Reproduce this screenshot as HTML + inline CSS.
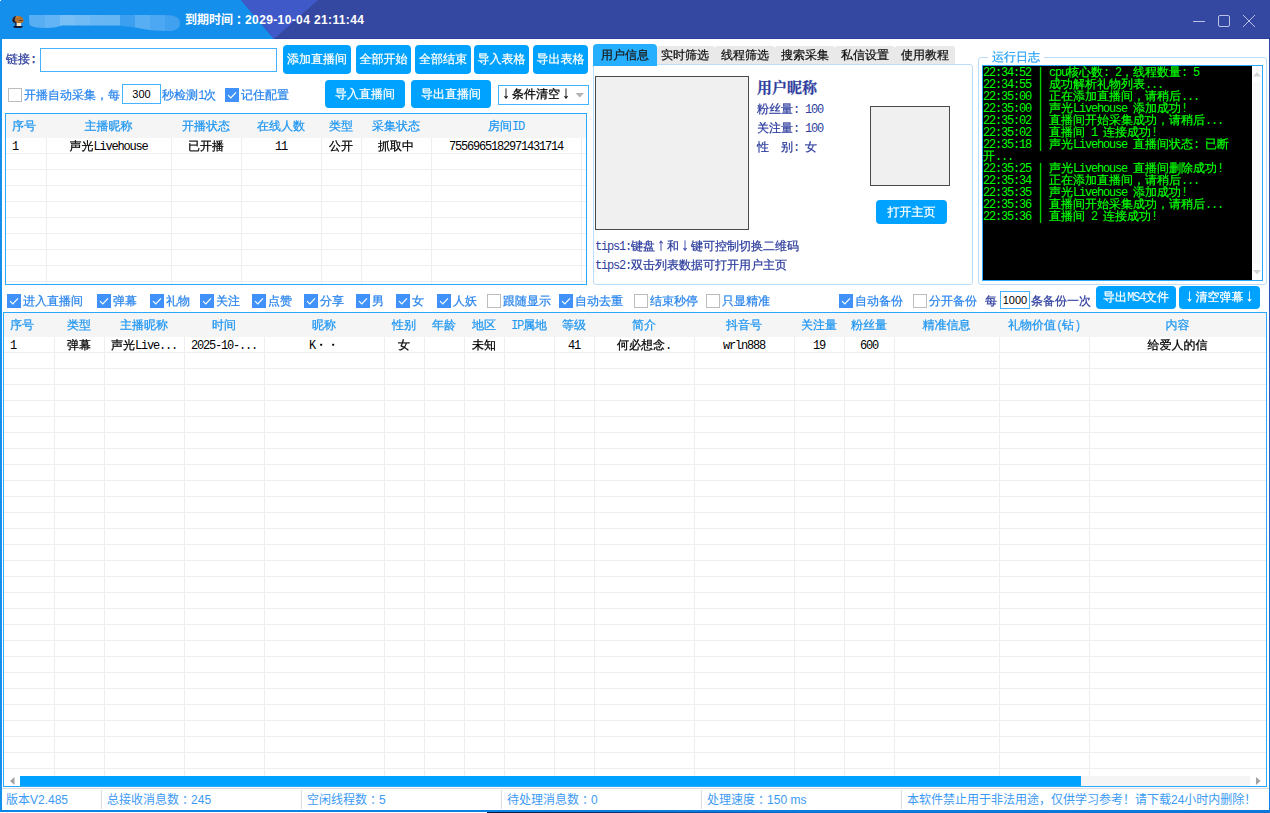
<!DOCTYPE html><html lang="zh-CN"><head><meta charset="utf-8"><title>到期时间</title><style>
*{margin:0;padding:0;box-sizing:border-box}
html,body{width:1270px;height:813px;overflow:hidden;background:#fff}
body{position:relative;font-family:"Liberation Mono","WenQuanYi Zen Hei","Noto Sans CJK SC",monospace;font-size:12px;line-height:14px;color:#000;-webkit-text-stroke:0.25px}
.a{position:absolute;white-space:pre}
.l{font-family:"Liberation Mono",monospace;font-size:12px;letter-spacing:-1.2px;-webkit-text-stroke:0}
.btn{position:absolute;background:#00a2ff;color:#fff;border-radius:4px;text-align:center;white-space:pre}
.hd{color:#1e96f2}
.cbl{color:#2b86ee}
.nv{color:#2e3e9e}
.cb{position:absolute;width:14px;height:14px;border:1px solid #bdbdbd;background:#fff}
.cb.on{border:0;background:#4092fa}
.cb.on svg{position:absolute;left:0;top:0}
.tb{position:absolute;border:1px solid #2ba7fb;background:#fff;overflow:hidden}
.c{position:absolute;text-align:center;white-space:pre;height:14px}
.ar{font-family:"WenQuanYi Zen Hei","Noto Sans CJK SC",sans-serif;line-height:0}
.yh{font-family:"Liberation Sans","Noto Sans CJK SC",sans-serif;-webkit-text-stroke:0}
.st{position:absolute;top:792px;height:16px;line-height:16px;font-size:12px;color:#3c9af4;white-space:pre}
.sep{position:absolute;top:790px;width:1px;height:19px;background:#dedede}
.fc{position:relative;left:3px}
.log{color:#00ff00}
</style></head><body>
<svg class="a" style="left:0;top:0" width="1270" height="39" viewBox="0 0 1270 39">
<rect width="1270" height="39" fill="#3548a1"/>
<polygon points="0,0 241,0 274,39 0,39" fill="#158fec"/>
<polygon points="241,0 318,0 274,39" fill="#4059c9"/>
<rect x="274" y="38" width="996" height="1" fill="#2c3f9c"/>
<rect x="0" y="0" width="1" height="1" fill="#fff"/>
<g>
<clipPath id="bl"><path d="M29 15 L165 15 Q180 15 180 23 Q180 31 168 31 Q150 31 138 28 Q125 26 118 25.5 L62 25.5 Q55 28 45 28 Q33 28 29.5 25 Z"/></clipPath>
<g clip-path="url(#bl)">
<rect x="29" y="14" width="16" height="18" fill="#58aef3"/>
<rect x="45" y="14" width="15" height="18" fill="#63b4f4"/>
<rect x="60" y="14" width="15" height="18" fill="#78bff6"/>
<rect x="75" y="14" width="15" height="18" fill="#70bbf5"/>
<rect x="90" y="14" width="15" height="18" fill="#68b7f4"/>
<rect x="105" y="14" width="15" height="18" fill="#66b6f4"/>
<rect x="120" y="14" width="15" height="18" fill="#3c9ff0"/>
<rect x="135" y="14" width="15" height="18" fill="#58aef3"/>
<rect x="150" y="14" width="15" height="18" fill="#4ca8f2"/>
<rect x="165" y="14" width="16" height="18" fill="#3fa1f0"/>
</g></g>
<!-- mushroom icon -->
<g>
<path d="M12.3 21 Q12.3 16 17.5 16 Q23.6 16 23.6 21 Q23.6 23 21.5 23 L15 23 Q12.3 23 12.3 21Z" fill="#b3712f"/>
<path d="M15 17 Q17.5 16 21 17.4 Q19 17 15 18.2Z" fill="#c98a45"/>
<path d="M12.2 20.5 Q12.6 16.6 16.2 15.9 Q14.2 18.5 15 21 L16.7 23 L16.7 26 L15.2 26 L15.2 23 Q12.4 22.8 12.2 20.5Z" fill="#16203c"/>
<rect x="19.5" y="20" width="3" height="1" fill="#5a3d22"/>
<rect x="16.7" y="23" width="4.4" height="3.2" fill="#f6e7c8"/>
<path d="M12.9 26 L23 26 L21.5 28 L14.5 28Z" fill="#0f1a36"/>
</g>
<!-- window controls -->
<g fill="none" stroke="#bcc1e7" stroke-width="1">
<path d="M1193 21.5H1205"/>
<rect x="1218.5" y="15.5" width="11" height="11" rx="1.5"/>
<path d="M1243 15 L1255 27 M1255 15 L1243 27"/>
</g>
</svg>
<div class="a yh" style="left:185px;top:11px;height:18px;line-height:18px;font-size:12px;font-weight:bold;color:#fff">到期时间<span class="fc">：</span><span style="letter-spacing:0.38px">2029-10-04 21:11:44</span></div>
<div class="a" style="left:0;top:39px;width:2px;height:773px;background:#158fec"></div>
<div class="a" style="left:1269px;top:39px;width:1px;height:774px;background:linear-gradient(#3046a2,#2a55b8 40%,#0c84e6)"></div>
<div class="a" style="left:0;top:810px;width:1270px;height:2px;background:linear-gradient(90deg,#0a86e6,#0c78da)"></div>
<div class="a" style="left:487px;top:812px;width:783px;height:1px;background:linear-gradient(90deg,#07183c,#0a2f6e 15%,#0d6fd2 40%,#0d74d8)"></div>
<div class="a nv" style="left:6px;top:53px">链接:</div>
<div class="a" style="left:40px;top:48px;width:237px;height:24px;border:1px solid #45b3fc;background:#fff"></div>
<div class="btn" style="left:283px;top:45px;width:68px;height:29px;line-height:31px">添加直播间</div>
<div class="btn" style="left:356px;top:45px;width:55px;height:29px;line-height:31px">全部开始</div>
<div class="btn" style="left:415px;top:45px;width:56px;height:29px;line-height:31px">全部结束</div>
<div class="btn" style="left:474px;top:45px;width:55px;height:29px;line-height:31px">导入表格</div>
<div class="btn" style="left:533px;top:45px;width:55px;height:29px;line-height:31px">导出表格</div>
<div class="btn" style="left:325px;top:80px;width:80px;height:28px;line-height:30px">导入直播间</div>
<div class="btn" style="left:411px;top:80px;width:80px;height:28px;line-height:30px">导出直播间</div>
<div class="cb" style="left:8px;top:88px"></div>
<div class="a cbl" style="left:24px;top:89px">开播自动采集，每</div>
<div class="a" style="left:122px;top:84px;width:39px;height:20px;border:1px solid #45b3fc;background:#fff;text-align:center;line-height:19px;font-family:'Liberation Sans',sans-serif;font-size:11px;-webkit-text-stroke:0">300</div>
<div class="a cbl" style="left:162px;top:89px">秒检测<span class="l">1</span>次</div>
<div class="cb on" style="left:225px;top:88px"><svg width="14" height="14" viewBox="0 0 14 14"><path d="M3 7.2 L5.8 10 L11 4.3" fill="none" stroke="#fff" stroke-width="1.15"/></svg></div>
<div class="a cbl" style="left:241px;top:89px">记住配置</div>
<div class="a" style="left:498px;top:85px;width:91px;height:20px;border:1px solid #45b3fc;background:#fff"></div>
<div class="a" style="left:500px;top:88px"><span class="ar">↓</span>条件清空<span class="ar">↓</span></div>
<svg class="a" style="left:575px;top:93px" width="10" height="5"><polygon points="0.5,0 9,0 4.75,4.5" fill="#b4b4b4"/></svg>
<div class="tb" style="left:5px;top:113px;width:582px;height:172px">
<div class="a" style="left:0;top:0;width:580px;height:24px;background:#f5f5f5"></div>
<div class="a" style="left:0;top:39px;width:580px;height:1px;background:#eeeeee"></div>
<div class="a" style="left:0;top:55px;width:580px;height:1px;background:#eeeeee"></div>
<div class="a" style="left:0;top:71px;width:580px;height:1px;background:#eeeeee"></div>
<div class="a" style="left:0;top:87px;width:580px;height:1px;background:#eeeeee"></div>
<div class="a" style="left:0;top:103px;width:580px;height:1px;background:#eeeeee"></div>
<div class="a" style="left:0;top:119px;width:580px;height:1px;background:#eeeeee"></div>
<div class="a" style="left:0;top:135px;width:580px;height:1px;background:#eeeeee"></div>
<div class="a" style="left:0;top:151px;width:580px;height:1px;background:#eeeeee"></div>
<div class="a" style="left:0;top:167px;width:580px;height:1px;background:#eeeeee"></div>
<div class="a" style="left:40px;top:24px;width:1px;height:146px;background:#eeeeee"></div>
<div class="a" style="left:165px;top:24px;width:1px;height:146px;background:#eeeeee"></div>
<div class="a" style="left:235px;top:24px;width:1px;height:146px;background:#eeeeee"></div>
<div class="a" style="left:315px;top:24px;width:1px;height:146px;background:#eeeeee"></div>
<div class="a" style="left:355px;top:24px;width:1px;height:146px;background:#eeeeee"></div>
<div class="a" style="left:425px;top:24px;width:1px;height:146px;background:#eeeeee"></div>
<div class="a" style="left:575px;top:24px;width:1px;height:146px;background:#eeeeee"></div>
<div class="c hd" style="left:6px;top:6px;text-align:left">序号</div>
<div class="c" style="left:6px;top:26px;text-align:left"><span class="l">1</span></div>
<div class="c hd" style="left:40px;top:6px;width:125px">主播昵称</div>
<div class="c" style="left:40px;top:26px;width:125px">声光<span class="l">Livehouse</span></div>
<div class="c hd" style="left:165px;top:6px;width:70px">开播状态</div>
<div class="c" style="left:165px;top:26px;width:70px">已开播</div>
<div class="c hd" style="left:235px;top:6px;width:80px">在线人数</div>
<div class="c" style="left:235px;top:26px;width:80px"><span class="l">11</span></div>
<div class="c hd" style="left:315px;top:6px;width:40px">类型</div>
<div class="c" style="left:315px;top:26px;width:40px">公开</div>
<div class="c hd" style="left:355px;top:6px;width:70px">采集状态</div>
<div class="c" style="left:355px;top:26px;width:70px">抓取中</div>
<div class="c hd" style="left:425px;top:6px;width:150px">房间<span class="l">ID</span></div>
<div class="c" style="left:425px;top:26px;width:150px"><span class="l">7556965182971431714</span></div>
<div class="c hd" style="left:575px;top:6px;width:5px"></div>
</div>
<div class="a" style="left:593px;top:64px;width:380px;height:221px;border:1px solid #b9ddfa;border-radius:3px;background:#fff"></div>
<div class="a" style="left:593px;top:44px;width:64px;height:22px;background:#27afff;border-radius:4px 4px 0 0;text-align:center;line-height:24px;color:#1a1a1a">用户信息</div>
<div class="a" style="left:657px;top:46px;width:58px;height:18px;background:#e9e9e9;border-radius:3px 3px 0 0"></div>
<div class="a" style="left:655px;top:46px;width:60px;height:18px;text-align:center;line-height:20px;color:#111">实时筛选</div>
<div class="a" style="left:715px;top:46px;width:60px;height:18px;background:#e9e9e9;border-radius:3px 3px 0 0"></div>
<div class="a" style="left:715px;top:46px;width:60px;height:18px;text-align:center;line-height:20px;color:#111">线程筛选</div>
<div class="a" style="left:775px;top:46px;width:60px;height:18px;background:#e9e9e9;border-radius:3px 3px 0 0"></div>
<div class="a" style="left:775px;top:46px;width:60px;height:18px;text-align:center;line-height:20px;color:#111">搜索采集</div>
<div class="a" style="left:835px;top:46px;width:60px;height:18px;background:#e9e9e9;border-radius:3px 3px 0 0"></div>
<div class="a" style="left:835px;top:46px;width:60px;height:18px;text-align:center;line-height:20px;color:#111">私信设置</div>
<div class="a" style="left:895px;top:46px;width:60px;height:18px;background:#e9e9e9;border-radius:3px 3px 0 0"></div>
<div class="a" style="left:895px;top:46px;width:60px;height:18px;text-align:center;line-height:20px;color:#111">使用教程</div>
<div class="a" style="left:595px;top:76px;width:154px;height:154px;border:1px solid #4a4a4a;background:#f0f0f0"></div>
<div class="a" style="left:870px;top:106px;width:80px;height:80px;border:1px solid #4a4a4a;background:#f0f0f0"></div>
<div class="a nv" style="left:757px;top:80px;font-size:15px;line-height:16px;font-weight:bold;font-family:'Liberation Serif','Noto Serif CJK SC',serif">用户昵称</div>
<div class="a nv" style="left:757px;top:103px">粉丝量<span class="l">: 100</span></div>
<div class="a nv" style="left:757px;top:122px">关注量<span class="l">: 100</span></div>
<div class="a nv" style="left:757px;top:141px">性　别<span class="l">:</span><span class="l"> </span>女</div>
<div class="btn" style="left:876px;top:200px;width:71px;height:24px;line-height:26px">打开主页</div>
<div class="a nv" style="left:595px;top:240px"><span class="l">tips1:</span>键盘<span class="ar">↑</span>和<span class="ar">↓</span>键可控制切换二维码</div>
<div class="a nv" style="left:595px;top:259px"><span class="l">tips2:</span>双击列表数据可打开用户主页</div>
<div class="a" style="left:978px;top:57px;width:289px;height:228px;border:1px solid #b9ddfa;border-radius:3px"></div>
<div class="a" style="left:988px;top:51px;width:56px;height:13px;background:#fff;color:#2aa2f6;padding-left:4px">运行日志</div>
<div class="a" style="left:982px;top:65px;width:281px;height:216px;border:1px solid #2ba7fb;background:#fff"></div>
<div class="a" style="left:983px;top:66px;width:269px;height:214px;background:#000"></div>
<div class="a" style="left:1253px;top:82px;width:8px;height:182px;background:#fafafa"></div>
<svg class="a" style="left:1253px;top:72px" width="8" height="5"><polygon points="0,4.5 8,4.5 4,0" fill="#d4d4d4"/></svg>
<svg class="a" style="left:1253px;top:270px" width="8" height="5"><polygon points="0,0 8,0 4,4.5" fill="#d4d4d4"/></svg>
<div class="a log" style="left:983px;top:66px"><span class="l">22:34:52 | </span><span class="l">cpu</span>核心数<span class="l">: 2</span>，线程数量<span class="l">: 5</span></div>
<div class="a log" style="left:983px;top:78px"><span class="l">22:34:55 | </span>成功解析礼物列表<span class="l">...</span></div>
<div class="a log" style="left:983px;top:90px"><span class="l">22:35:00 | </span>正在添加直播间，请稍后<span class="l">...</span></div>
<div class="a log" style="left:983px;top:102px"><span class="l">22:35:00 | </span>声光<span class="l">Livehouse </span>添加成功<span class="l">!</span></div>
<div class="a log" style="left:983px;top:114px"><span class="l">22:35:02 | </span>直播间开始采集成功，请稍后<span class="l">...</span></div>
<div class="a log" style="left:983px;top:126px"><span class="l">22:35:02 | </span>直播间<span class="l"> 1 </span>连接成功<span class="l">!</span></div>
<div class="a log" style="left:983px;top:138px"><span class="l">22:35:18 | </span>声光<span class="l">Livehouse </span>直播间状态<span class="l">: </span>已断</div>
<div class="a log" style="left:983px;top:150px">开<span class="l">...</span></div>
<div class="a log" style="left:983px;top:162px"><span class="l">22:35:25 | </span>声光<span class="l">Livehouse </span>直播间删除成功<span class="l">!</span></div>
<div class="a log" style="left:983px;top:174px"><span class="l">22:35:34 | </span>正在添加直播间，请稍后<span class="l">...</span></div>
<div class="a log" style="left:983px;top:186px"><span class="l">22:35:35 | </span>声光<span class="l">Livehouse </span>添加成功<span class="l">!</span></div>
<div class="a log" style="left:983px;top:198px"><span class="l">22:35:36 | </span>直播间开始采集成功，请稍后<span class="l">...</span></div>
<div class="a log" style="left:983px;top:210px"><span class="l">22:35:36 | </span>直播间<span class="l"> 2 </span>连接成功<span class="l">!</span></div>
<div class="cb on" style="left:7px;top:294px"><svg width="14" height="14" viewBox="0 0 14 14"><path d="M3 7.2 L5.8 10 L11 4.3" fill="none" stroke="#fff" stroke-width="1.15"/></svg></div>
<div class="a cbl" style="left:23px;top:295px">进入直播间</div>
<div class="cb on" style="left:97px;top:294px"><svg width="14" height="14" viewBox="0 0 14 14"><path d="M3 7.2 L5.8 10 L11 4.3" fill="none" stroke="#fff" stroke-width="1.15"/></svg></div>
<div class="a cbl" style="left:113px;top:295px">弹幕</div>
<div class="cb on" style="left:150px;top:294px"><svg width="14" height="14" viewBox="0 0 14 14"><path d="M3 7.2 L5.8 10 L11 4.3" fill="none" stroke="#fff" stroke-width="1.15"/></svg></div>
<div class="a cbl" style="left:166px;top:295px">礼物</div>
<div class="cb on" style="left:200px;top:294px"><svg width="14" height="14" viewBox="0 0 14 14"><path d="M3 7.2 L5.8 10 L11 4.3" fill="none" stroke="#fff" stroke-width="1.15"/></svg></div>
<div class="a cbl" style="left:216px;top:295px">关注</div>
<div class="cb on" style="left:252px;top:294px"><svg width="14" height="14" viewBox="0 0 14 14"><path d="M3 7.2 L5.8 10 L11 4.3" fill="none" stroke="#fff" stroke-width="1.15"/></svg></div>
<div class="a cbl" style="left:268px;top:295px">点赞</div>
<div class="cb on" style="left:304px;top:294px"><svg width="14" height="14" viewBox="0 0 14 14"><path d="M3 7.2 L5.8 10 L11 4.3" fill="none" stroke="#fff" stroke-width="1.15"/></svg></div>
<div class="a cbl" style="left:320px;top:295px">分享</div>
<div class="cb on" style="left:356px;top:294px"><svg width="14" height="14" viewBox="0 0 14 14"><path d="M3 7.2 L5.8 10 L11 4.3" fill="none" stroke="#fff" stroke-width="1.15"/></svg></div>
<div class="a cbl" style="left:372px;top:295px">男</div>
<div class="cb on" style="left:396px;top:294px"><svg width="14" height="14" viewBox="0 0 14 14"><path d="M3 7.2 L5.8 10 L11 4.3" fill="none" stroke="#fff" stroke-width="1.15"/></svg></div>
<div class="a cbl" style="left:412px;top:295px">女</div>
<div class="cb on" style="left:437px;top:294px"><svg width="14" height="14" viewBox="0 0 14 14"><path d="M3 7.2 L5.8 10 L11 4.3" fill="none" stroke="#fff" stroke-width="1.15"/></svg></div>
<div class="a cbl" style="left:453px;top:295px">人妖</div>
<div class="cb" style="left:487px;top:294px"></div>
<div class="a cbl" style="left:503px;top:295px">跟随显示</div>
<div class="cb on" style="left:559px;top:294px"><svg width="14" height="14" viewBox="0 0 14 14"><path d="M3 7.2 L5.8 10 L11 4.3" fill="none" stroke="#fff" stroke-width="1.15"/></svg></div>
<div class="a cbl" style="left:575px;top:295px">自动去重</div>
<div class="cb" style="left:634px;top:294px"></div>
<div class="a cbl" style="left:650px;top:295px">结束秒停</div>
<div class="cb" style="left:706px;top:294px"></div>
<div class="a cbl" style="left:722px;top:295px">只显精准</div>
<div class="cb on" style="left:839px;top:294px"><svg width="14" height="14" viewBox="0 0 14 14"><path d="M3 7.2 L5.8 10 L11 4.3" fill="none" stroke="#fff" stroke-width="1.15"/></svg></div>
<div class="a cbl" style="left:855px;top:295px">自动备份</div>
<div class="cb" style="left:913px;top:294px"></div>
<div class="a cbl" style="left:929px;top:295px">分开备份</div>
<div class="a nv" style="left:985px;top:295px">每</div>
<div class="a" style="left:1000px;top:291px;width:30px;height:18px;border:1px solid #45b3fc;background:#fff;text-align:center;line-height:17px;font-family:'Liberation Sans',sans-serif;font-size:11px;-webkit-text-stroke:0">1000</div>
<div class="a nv" style="left:1031px;top:295px">条备份一次</div>
<div class="btn" style="left:1096px;top:286px;width:80px;height:23px;line-height:25px">导出<span class="l">MS4</span>文件</div>
<div class="btn" style="left:1179px;top:286px;width:81px;height:23px;line-height:25px"><span class="ar">↓</span>清空弹幕<span class="ar">↓</span></div>
<div class="tb" style="left:3px;top:312px;width:1264px;height:475px">
<div class="a" style="left:0;top:0;width:1262px;height:24px;background:#f5f5f5"></div>
<div class="a" style="left:0;top:39px;width:1262px;height:1px;background:#eeeeee"></div>
<div class="a" style="left:0;top:55px;width:1262px;height:1px;background:#eeeeee"></div>
<div class="a" style="left:0;top:71px;width:1262px;height:1px;background:#eeeeee"></div>
<div class="a" style="left:0;top:87px;width:1262px;height:1px;background:#eeeeee"></div>
<div class="a" style="left:0;top:103px;width:1262px;height:1px;background:#eeeeee"></div>
<div class="a" style="left:0;top:119px;width:1262px;height:1px;background:#eeeeee"></div>
<div class="a" style="left:0;top:135px;width:1262px;height:1px;background:#eeeeee"></div>
<div class="a" style="left:0;top:151px;width:1262px;height:1px;background:#eeeeee"></div>
<div class="a" style="left:0;top:167px;width:1262px;height:1px;background:#eeeeee"></div>
<div class="a" style="left:0;top:183px;width:1262px;height:1px;background:#eeeeee"></div>
<div class="a" style="left:0;top:199px;width:1262px;height:1px;background:#eeeeee"></div>
<div class="a" style="left:0;top:215px;width:1262px;height:1px;background:#eeeeee"></div>
<div class="a" style="left:0;top:231px;width:1262px;height:1px;background:#eeeeee"></div>
<div class="a" style="left:0;top:247px;width:1262px;height:1px;background:#eeeeee"></div>
<div class="a" style="left:0;top:263px;width:1262px;height:1px;background:#eeeeee"></div>
<div class="a" style="left:0;top:279px;width:1262px;height:1px;background:#eeeeee"></div>
<div class="a" style="left:0;top:295px;width:1262px;height:1px;background:#eeeeee"></div>
<div class="a" style="left:0;top:311px;width:1262px;height:1px;background:#eeeeee"></div>
<div class="a" style="left:0;top:327px;width:1262px;height:1px;background:#eeeeee"></div>
<div class="a" style="left:0;top:343px;width:1262px;height:1px;background:#eeeeee"></div>
<div class="a" style="left:0;top:359px;width:1262px;height:1px;background:#eeeeee"></div>
<div class="a" style="left:0;top:375px;width:1262px;height:1px;background:#eeeeee"></div>
<div class="a" style="left:0;top:391px;width:1262px;height:1px;background:#eeeeee"></div>
<div class="a" style="left:0;top:407px;width:1262px;height:1px;background:#eeeeee"></div>
<div class="a" style="left:0;top:423px;width:1262px;height:1px;background:#eeeeee"></div>
<div class="a" style="left:0;top:439px;width:1262px;height:1px;background:#eeeeee"></div>
<div class="a" style="left:0;top:455px;width:1262px;height:1px;background:#eeeeee"></div>
<div class="a" style="left:50px;top:24px;width:1px;height:439px;background:#eeeeee"></div>
<div class="a" style="left:100px;top:24px;width:1px;height:439px;background:#eeeeee"></div>
<div class="a" style="left:180px;top:24px;width:1px;height:439px;background:#eeeeee"></div>
<div class="a" style="left:260px;top:24px;width:1px;height:439px;background:#eeeeee"></div>
<div class="a" style="left:380px;top:24px;width:1px;height:439px;background:#eeeeee"></div>
<div class="a" style="left:420px;top:24px;width:1px;height:439px;background:#eeeeee"></div>
<div class="a" style="left:460px;top:24px;width:1px;height:439px;background:#eeeeee"></div>
<div class="a" style="left:500px;top:24px;width:1px;height:439px;background:#eeeeee"></div>
<div class="a" style="left:550px;top:24px;width:1px;height:439px;background:#eeeeee"></div>
<div class="a" style="left:590px;top:24px;width:1px;height:439px;background:#eeeeee"></div>
<div class="a" style="left:690px;top:24px;width:1px;height:439px;background:#eeeeee"></div>
<div class="a" style="left:790px;top:24px;width:1px;height:439px;background:#eeeeee"></div>
<div class="a" style="left:840px;top:24px;width:1px;height:439px;background:#eeeeee"></div>
<div class="a" style="left:890px;top:24px;width:1px;height:439px;background:#eeeeee"></div>
<div class="a" style="left:995px;top:24px;width:1px;height:439px;background:#eeeeee"></div>
<div class="a" style="left:1085px;top:24px;width:1px;height:439px;background:#eeeeee"></div>
<div class="c hd" style="left:6px;top:6px;text-align:left">序号</div>
<div class="c" style="left:6px;top:26px;text-align:left"><span class="l">1</span></div>
<div class="c hd" style="left:50px;top:6px;width:50px">类型</div>
<div class="c" style="left:50px;top:26px;width:50px">弹幕</div>
<div class="c hd" style="left:100px;top:6px;width:80px">主播昵称</div>
<div class="c" style="left:100px;top:26px;width:80px">声光<span class="l">Live...</span></div>
<div class="c hd" style="left:180px;top:6px;width:80px">时间</div>
<div class="c" style="left:180px;top:26px;width:80px"><span class="l">2025-10-...</span></div>
<div class="c hd" style="left:260px;top:6px;width:120px">昵称</div>
<div class="c" style="left:260px;top:26px;width:120px"><span class="l">K</span>・・</div>
<div class="c hd" style="left:380px;top:6px;width:40px">性别</div>
<div class="c" style="left:380px;top:26px;width:40px">女</div>
<div class="c hd" style="left:420px;top:6px;width:40px">年龄</div>
<div class="c hd" style="left:460px;top:6px;width:40px">地区</div>
<div class="c" style="left:460px;top:26px;width:40px">未知</div>
<div class="c hd" style="left:500px;top:6px;width:50px"><span class="l">IP</span>属地</div>
<div class="c hd" style="left:550px;top:6px;width:40px">等级</div>
<div class="c" style="left:550px;top:26px;width:40px"><span class="l">41</span></div>
<div class="c hd" style="left:590px;top:6px;width:100px">简介</div>
<div class="c" style="left:590px;top:26px;width:100px">何必想念<span class="l">.</span></div>
<div class="c hd" style="left:690px;top:6px;width:100px">抖音号</div>
<div class="c" style="left:690px;top:26px;width:100px"><span class="l">wrln888</span></div>
<div class="c hd" style="left:790px;top:6px;width:50px">关注量</div>
<div class="c" style="left:790px;top:26px;width:50px"><span class="l">19</span></div>
<div class="c hd" style="left:840px;top:6px;width:50px">粉丝量</div>
<div class="c" style="left:840px;top:26px;width:50px"><span class="l">600</span></div>
<div class="c hd" style="left:890px;top:6px;width:105px">精准信息</div>
<div class="c hd" style="left:995px;top:6px;width:90px">礼物价值<span class="l">(</span>钻<span class="l">)</span></div>
<div class="c hd" style="left:1085px;top:6px;width:177px">内容</div>
<div class="c" style="left:1085px;top:26px;width:177px">给爱人的信</div>
<div class="a" style="left:0;top:463px;width:1262px;height:10px;background:#fff"></div>
<div class="a" style="left:16px;top:463px;width:1061px;height:10px;background:#00a2ff"></div>
<div class="a" style="left:1077px;top:463px;width:169px;height:10px;background:#f5f5f5"></div>
<svg class="a" style="left:6px;top:464px" width="5" height="8"><polygon points="4.5,0 4.5,8 0,4" fill="#a3a3a3"/></svg>
<svg class="a" style="left:1252px;top:464px" width="5" height="8"><polygon points="0,0 0,8 4.5,4" fill="#a3a3a3"/></svg>
</div>
<div class="a" style="left:2px;top:788px;width:1267px;height:1px;background:#dcdcdc"></div>
<div class="sep" style="left:101px"></div>
<div class="sep" style="left:301px"></div>
<div class="sep" style="left:501px"></div>
<div class="sep" style="left:701px"></div>
<div class="sep" style="left:901px"></div>
<div class="st yh" style="left:6px">版本V2.485</div>
<div class="st yh" style="left:107px">总接收消息数<span class="fc">：</span>245</div>
<div class="st yh" style="left:307px">空闲线程数<span class="fc">：</span>5</div>
<div class="st yh" style="left:507px">待处理消息数<span class="fc">：</span>0</div>
<div class="st yh" style="left:707px">处理速度<span class="fc">：</span>150 ms</div>
<div class="st yh" style="left:907px">本软件禁止用于非法用途，仅供学习参考！请下载24小时内删除！</div>
</body></html>
